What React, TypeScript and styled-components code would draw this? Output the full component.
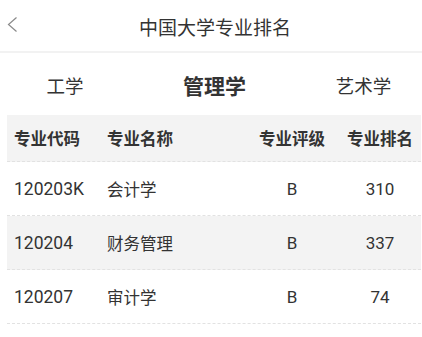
import React from 'react'
import styled, { createGlobalStyle } from 'styled-components'

const GlobalStyle = createGlobalStyle`
  body {
    margin: 0;
    background: #fff;
    font-family: Roboto, "Noto Sans CJK SC", sans-serif;
    color: #333;
  }
`

const Page = styled.div`
  width: 422px;
  height: 337px;
  overflow: hidden;
`

const NavBar = styled.div`
  position: relative;
  height: 51px;
  display: flex;
  align-items: center;
  justify-content: center;
  border-bottom: 2px solid #f2f2f2;

  .back {
    position: absolute;
    left: 7px;
    top: 17px;
  }

  .title {
    font-size: 19px;
    color: #333;
    padding-top: 2px;
    padding-left: 8px;
  }
`

const Tabs = styled.div`
  height: 62px;
  display: grid;
  grid-template-columns: 130px 169px 1fr;
  align-items: center;
`

const Tab = styled.div<{ $active?: boolean }>`
  text-align: center;
  font-size: ${p => (p.$active ? '21px' : '18.5px')};
  font-weight: ${p => (p.$active ? 700 : 400)};
  color: #333;
  padding-top: 2px;

  &:last-child {
    padding-left: 6px;
  }
`

const Table = styled.div`
  margin-left: 7px;
  width: 414px;
`

const Row = styled.div<{ $shaded?: boolean; $head?: boolean }>`
  display: grid;
  grid-template-columns: 100px 145px 80px 89px;
  align-items: center;
  height: ${p => (p.$head ? '46px' : '53px')};
  background: ${p => (p.$shaded ? '#f3f3f3' : '#fff')};
  border-bottom: 1px dashed #e2e2e2;
  font-size: 16.5px;
  font-weight: ${p => (p.$head ? 700 : 400)};
  color: #333;

  span:nth-child(1) {
    padding-left: 7px;
    font-size: ${p => (p.$head ? '16.5px' : '17.5px')};
  }

  span:nth-child(3) {
    text-align: center;
    font-size: ${p => (p.$head ? '16.5px' : '17px')};
  }

  span:nth-child(4) {
    text-align: center;
    padding-left: 7px;
    font-size: ${p => (p.$head ? '16.5px' : '17px')};
  }
`

const majors = [
  { code: '120203K', name: '会计学', grade: 'B', rank: 310 },
  { code: '120204', name: '财务管理', grade: 'B', rank: 337 },
  { code: '120207', name: '审计学', grade: 'B', rank: 74 },
]

const App: React.FC = () => {
  return (
    <Page>
      <GlobalStyle />
      <NavBar>
        <svg className="back" width="10" height="15" viewBox="0 0 10 15">
          <path d="M9.5 0.5 L1.5 7.5 L9.5 14.5" fill="none" stroke="#8a8a8a" strokeWidth="1.2" />
        </svg>
        <div className="title">中国大学专业排名</div>
      </NavBar>

      <Tabs>
        <Tab>工学</Tab>
        <Tab $active>管理学</Tab>
        <Tab>艺术学</Tab>
      </Tabs>

      <Table>
        <Row $head $shaded>
          <span>专业代码</span>
          <span>专业名称</span>
          <span>专业评级</span>
          <span>专业排名</span>
        </Row>
        {majors.map((m, i) => (
          <Row key={m.code} $shaded={i % 2 === 1}>
            <span>{m.code}</span>
            <span>{m.name}</span>
            <span>{m.grade}</span>
            <span>{m.rank}</span>
          </Row>
        ))}
      </Table>
    </Page>
  )
}

export default App
